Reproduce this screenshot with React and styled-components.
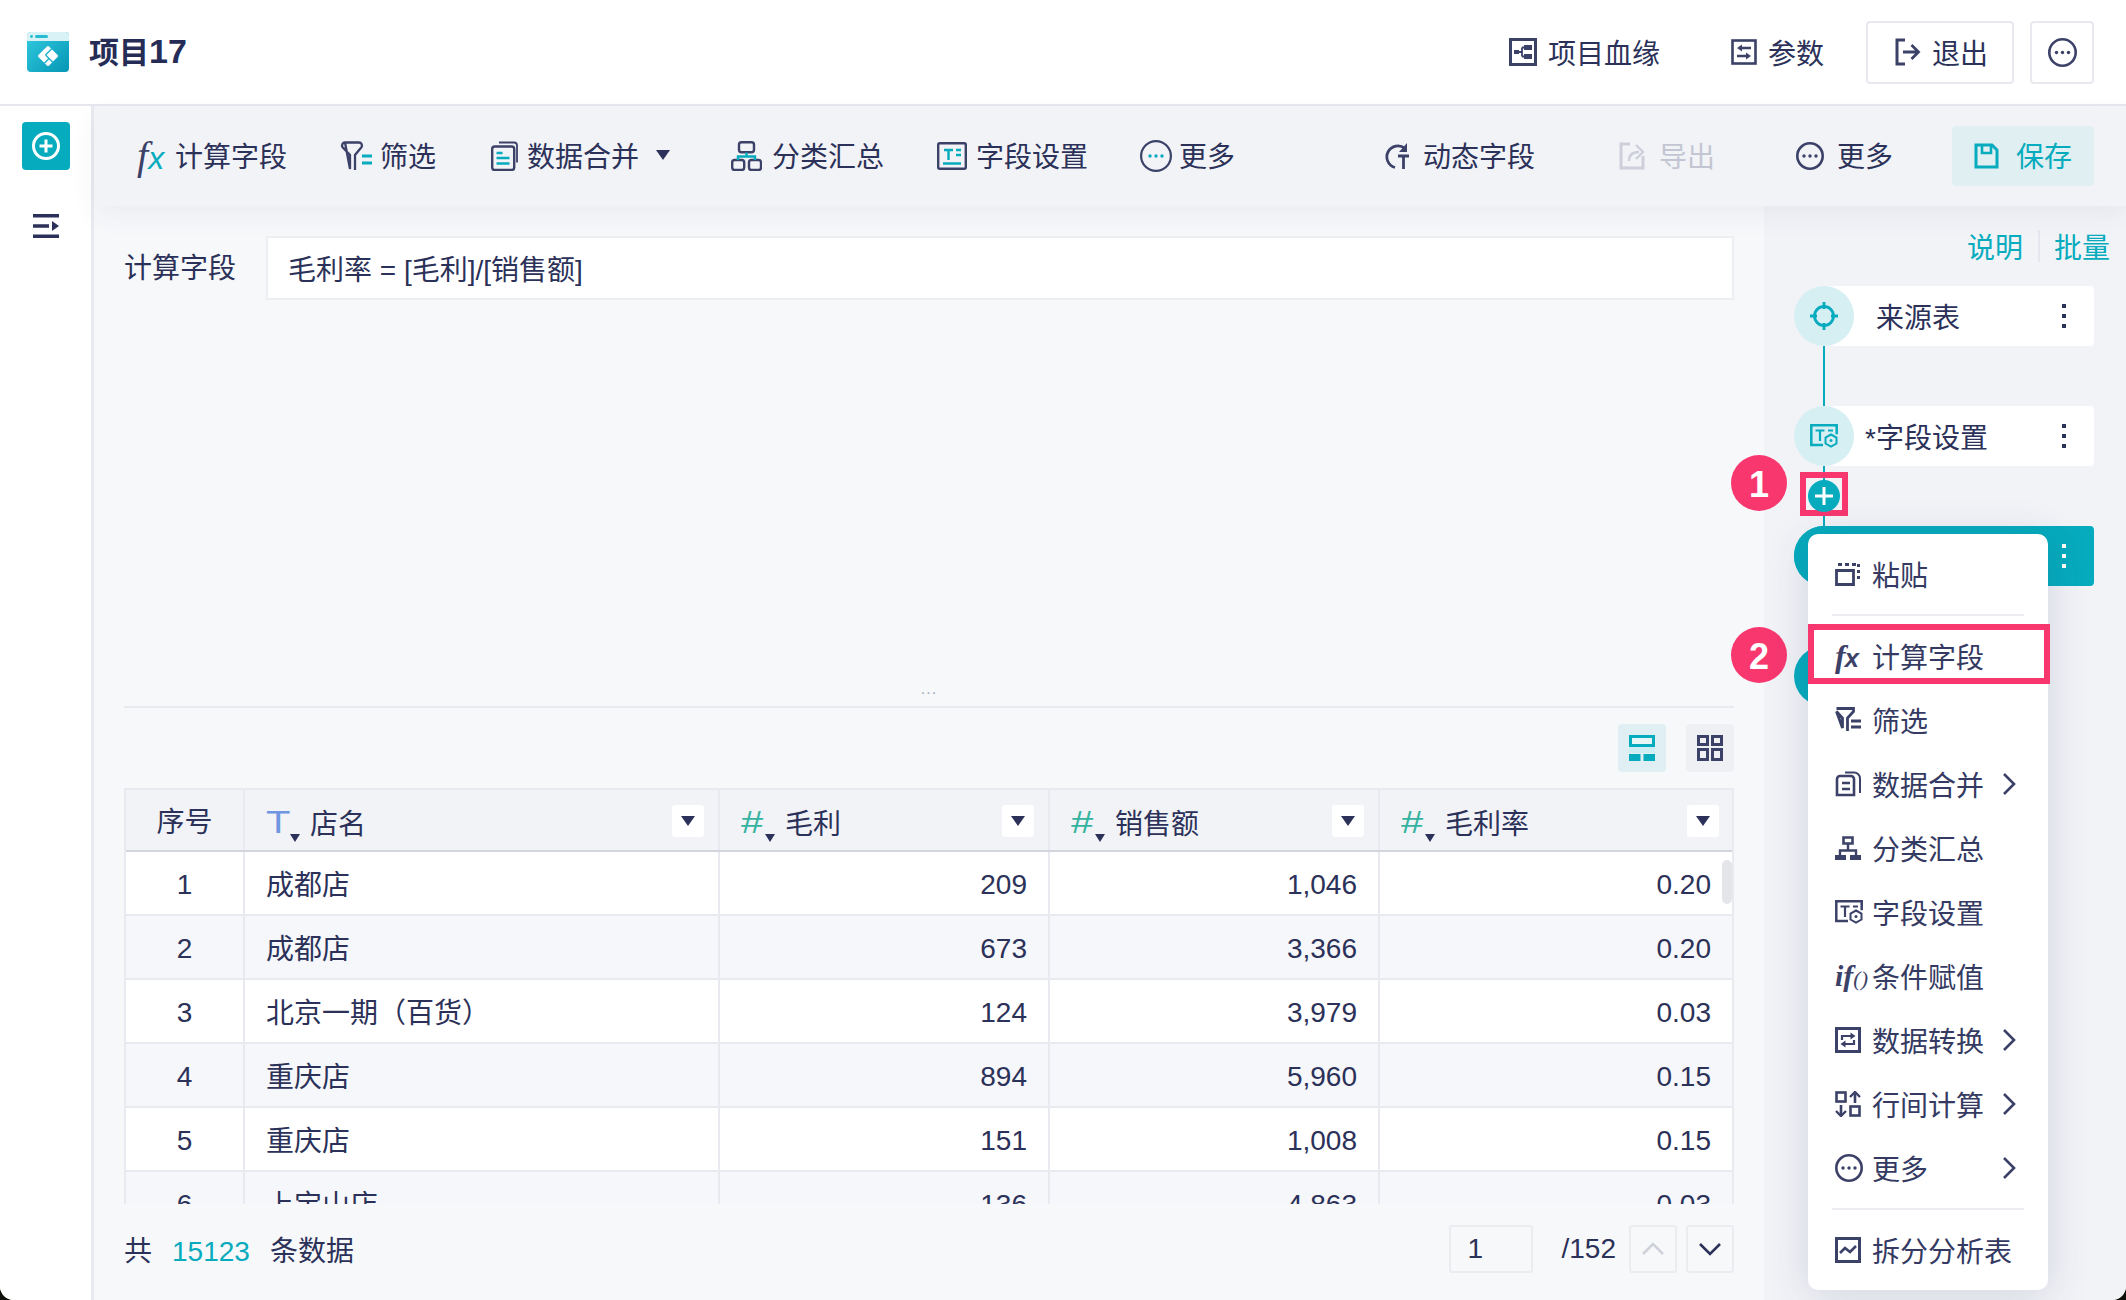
import React from 'react';
import styled, { createGlobalStyle } from 'styled-components';

const NAVY = '#2b3158';
const ICON = '#3c4168';
const TEAL = '#06abbd';
const PINK = '#f8376f';
const LINE = '#e9eaef';

const GlobalStyle = createGlobalStyle`
  html, body {
    margin: 0;
    padding: 0;
    background: #10100a;
  }
  body {
    font-family: "Liberation Sans", "Noto Sans CJK SC", sans-serif;
    font-size: 28px;
    color: ${NAVY};
  }
`;

const Page = styled.div`
  width: 2126px;
  height: 1300px;
  background: #fff;
  overflow: hidden;
  border-radius: 0 0 14px 14px;
  display: flex;
  flex-direction: column;
`;

/* top bar */
const TopBar = styled.header`
  height: 104px;
  flex: none;
  display: flex;
  align-items: center;
  padding: 0 32px 0 27px;
  background: #fff;
  border-bottom: 2px solid #e6e7ee;
`;

const Title = styled.h1`
  margin: 0 0 4px 20px;
  font-size: 30px;
  font-weight: 700;
  color: #252c56;
  flex: 1;
  b {
    font-size: 34px;
  }
`;

const TopAction = styled.div`
  display: flex;
  align-items: center;
  gap: 11px;
  margin-right: ${(p) => p.$mr || 0}px;
`;

const OutlineButton = styled.div`
  height: 63px;
  width: ${(p) => p.$w}px;
  box-sizing: border-box;
  display: flex;
  align-items: center;
  justify-content: center;
  gap: 11px;
  padding-left: ${(p) => p.$pl || 0}px;
  border: 2px solid #e8e9ef;
  border-radius: 4px;
  margin-left: ${(p) => p.$ml || 0}px;
`;

/* layout */
const Body = styled.div`
  flex: 1;
  display: flex;
  min-height: 0;
`;

const Sidebar = styled.aside`
  width: 91px;
  flex: none;
  background: #fff;
  border-right: 3px solid ${LINE};
  display: flex;
  flex-direction: column;
  align-items: center;
  padding-top: 16px;
  gap: 44px;
`;

const AddButton = styled.div`
  width: 48px;
  height: 48px;
  border-radius: 4px;
  background: ${TEAL};
  display: flex;
  align-items: center;
  justify-content: center;
`;

const Main = styled.div`
  flex: 1;
  display: flex;
  flex-direction: column;
  min-width: 0;
`;

const Toolbar = styled.div`
  height: 100px;
  flex: none;
  display: flex;
  align-items: center;
  justify-content: space-between;
  padding: 0 32px 0 43px;
  background: #f2f3f7;
  box-shadow: 0 10px 24px rgba(60, 70, 110, 0.06);
  position: relative;
  z-index: 2;
`;

const ToolGroup = styled.div`
  display: flex;
  align-items: center;
`;

const ToolItem = styled.div`
  display: flex;
  align-items: center;
  gap: ${(p) => (p.$gap === undefined ? 10 : p.$gap)}px;
  margin-left: ${(p) => p.$ml || 0}px;
  color: ${(p) => (p.$disabled ? '#c3c6d2' : NAVY)};
  > span {
    position: relative;
    top: -1px;
  }
`;

const SaveButton = styled.div`
  width: 142px;
  height: 60px;
  margin-left: 59px;
  display: flex;
  align-items: center;
  justify-content: center;
  gap: 17px;
  border-radius: 4px;
  background: #e0eff2;
  color: ${TEAL};
  > span {
    position: relative;
    top: -1px;
  }
`;

const Caret = styled.span`
  width: 0;
  height: 0;
  margin-left: 8px;
  border-left: 7px solid transparent;
  border-right: 7px solid transparent;
  border-top: 10px solid ${NAVY};
`;

const FxMark = styled.i`
  font-family: "Liberation Serif", serif;
  font-style: italic;
  font-size: ${(p) => p.$size || 40}px;
  font-weight: ${(p) => p.$weight || 400};
  line-height: 1;
  width: ${(p) => p.$w || 30}px;
  letter-spacing: ${(p) => p.$track || 0}px;
  white-space: nowrap;
  color: ${ICON};
  em {
    font-family: "Liberation Sans", sans-serif;
    font-size: 0.8em;
    color: ${(p) => p.$accent || TEAL};
  }
`;

const Content = styled.div`
  flex: 1;
  display: flex;
  min-height: 0;
`;

const WorkArea = styled.section`
  flex: 1;
  min-width: 0;
  background: #f7f8fa;
  padding: 30px 30px 0;
  display: flex;
  flex-direction: column;
`;

const FormRow = styled.div`
  display: flex;
  align-items: center;
  height: 64px;
  flex: none;
`;

const FormLabel = styled.label`
  width: 142px;
  flex: none;
  position: relative;
  top: -2px;
`;

const FormulaInput = styled.div`
  flex: 1;
  height: 64px;
  box-sizing: border-box;
  background: #fff;
  border: 2px solid #eceef2;
  padding-left: 20px;
  display: flex;
  align-items: center;
`;

const Splitter = styled.div`
  height: 408px;
  box-sizing: border-box;
  padding-bottom: 8px;
  flex: none;
  border-bottom: 2px solid ${LINE};
  display: flex;
  align-items: flex-end;
  justify-content: center;
  color: #a9adbb;
  font-size: 16px;
  line-height: 18px;
  letter-spacing: 1px;
`;

const ViewRow = styled.div`
  display: flex;
  justify-content: flex-end;
  gap: 20px;
  margin: 16px 0;
  flex: none;
`;

const ViewButton = styled.div`
  width: 48px;
  height: 48px;
  border-radius: 4px;
  display: flex;
  align-items: center;
  justify-content: center;
  background: ${(p) => (p.$active ? '#e0eff4' : '#eff0f4')};
`;

/* table */
const TableWrap = styled.div`
  height: 416px;
  flex: none;
  overflow: hidden;
  position: relative;
  box-sizing: border-box;
  border: 2px solid ${LINE};
  border-bottom: 0;
`;

const HeadRow = styled.div`
  display: flex;
  height: 62px;
  box-sizing: border-box;
  background: #f2f3f7;
  border-bottom: 2px solid #d2d5de;
`;

const DataRow = styled.div`
  display: flex;
  height: 64px;
  box-sizing: border-box;
  background: ${(p) => (p.$even ? '#f6f7fa' : '#fff')};
  border-bottom: 2px solid ${LINE};
`;

const Cell = styled.div`
  width: ${(p) => p.$w}px;
  flex: none;
  box-sizing: border-box;
  display: flex;
  align-items: center;
  justify-content: ${(p) =>
    p.$align === 'center' ? 'center' : p.$align === 'right' ? 'flex-end' : 'flex-start'};
  padding: ${(p) => (p.$num ? '4px' : '0')} 21px 0;
  border-right: 2px solid ${LINE};
  white-space: nowrap;
  &:last-child {
    border-right: 0;
  }
`;

const HeadCell = styled(Cell)`
  padding: 1px 14px 0 21px;
  &:last-child {
    padding-right: 13px;
  }
`;

const TypeMark = styled.span`
  position: relative;
  width: 22px;
  margin-right: 22px;
  top: 1px;
  line-height: 32px;
  &::after {
    content: '';
    position: absolute;
    left: 24px;
    bottom: -4px;
    border-left: 5px solid transparent;
    border-right: 5px solid transparent;
    border-top: 8px solid ${NAVY};
  }
`;

const TypeGlyph = styled.span`
  display: block;
  font-size: 32px;
  color: ${(p) => p.$color};
  transform: scaleX(1.25);
  transform-origin: left center;
`;

const HeadText = styled.span`
  flex: 1;
  position: relative;
  top: 1px;
`;

const FilterButton = styled.span`
  width: 32px;
  height: 32px;
  border-radius: 3px;
  background: #fff;
  display: flex;
  align-items: center;
  justify-content: center;
  &::before {
    content: '';
    border-left: 7px solid transparent;
    border-right: 7px solid transparent;
    border-top: 10px solid ${NAVY};
  }
`;

const ScrollThumb = styled.div`
  position: absolute;
  right: 0;
  top: 70px;
  width: 10px;
  height: 44px;
  border-radius: 6px;
  background: #e4e5e9;
`;

const Footer = styled.div`
  flex: 1;
  display: flex;
  align-items: center;
  justify-content: space-between;
  padding-bottom: 7px;
`;

const Total = styled.div`
  display: flex;
  align-items: baseline;
  gap: 20px;
`;

const Teal = styled.span`
  color: ${TEAL};
`;

const Pager = styled.div`
  display: flex;
  align-items: center;
`;

const PageBox = styled.div`
  width: 84px;
  height: 48px;
  box-sizing: border-box;
  border: 2px solid #ebecf0;
  border-radius: 3px;
  padding-left: 17px;
  display: flex;
  align-items: center;
`;

const PageCount = styled.span`
  margin: 0 13px 0 29px;
`;

const PageButton = styled.div`
  width: 48px;
  height: 48px;
  box-sizing: border-box;
  border: 2px solid #ebecf0;
  border-radius: 3px;
  margin-left: ${(p) => p.$ml || 0}px;
  display: flex;
  align-items: center;
  justify-content: center;
`;

/* right panel */
const SidePanel = styled.aside`
  width: 362px;
  flex: none;
  position: relative;
  background: #f2f3f7;
  padding-top: 24px;
  box-sizing: border-box;
`;

const LinkRow = styled.div`
  display: flex;
  justify-content: flex-end;
  align-items: center;
  height: 32px;
  padding-right: 16px;
  margin-bottom: 24px;
  color: ${TEAL};
`;

const LinkDivider = styled.span`
  width: 2px;
  height: 32px;
  background: #e6e7ee;
  margin: 0 14px 0 15px;
`;

const Nodes = styled.div`
  padding: 0 32px 0 30px;
`;

const Node = styled.div`
  display: flex;
  align-items: center;
  height: 60px;
  width: ${(p) => (p.$bare ? 60 : 300)}px;
  border-radius: 30px 4px 4px 30px;
  background: ${(p) => (p.$active ? TEAL : '#fff')};
`;

const NodeCircle = styled.div`
  width: 60px;
  height: 60px;
  flex: none;
  border-radius: 50%;
  background: ${(p) => (p.$active ? TEAL : '#d6eff3')};
  display: flex;
  align-items: center;
  justify-content: center;
`;

const NodeLabel = styled.span`
  flex: 1;
  margin-left: ${(p) => p.$ml}px;
`;

const Dots = styled.span`
  width: 4px;
  margin-right: 28px;
  display: flex;
  flex-direction: column;
  gap: 6px;
  i {
    width: 4px;
    height: 4px;
    background: ${(p) => (p.$light ? '#fff' : NAVY)};
  }
`;

const Connector = styled.div`
  position: relative;
  width: 2px;
  height: 60px;
  margin-left: 29px;
  background: ${TEAL};
`;

const PlusCircle = styled.div`
  position: absolute;
  left: -15px;
  top: 14px;
  width: 32px;
  height: 32px;
  border-radius: 50%;
  background: ${TEAL};
  display: flex;
  align-items: center;
  justify-content: center;
`;

const PlusFrame = styled.div`
  position: absolute;
  left: -23px;
  top: 6px;
  width: 48px;
  height: 44px;
  box-sizing: border-box;
  border: 6px solid ${PINK};
`;

const Badge = styled.div`
  position: absolute;
  left: -33px;
  top: ${(p) => p.$top}px;
  width: 56px;
  height: 56px;
  box-sizing: border-box;
  padding-top: 4px;
  border-radius: 50%;
  background: ${PINK};
  color: #fff;
  font-size: 36px;
  font-weight: 700;
  display: flex;
  align-items: center;
  justify-content: center;
`;

const Menu = styled.div`
  position: absolute;
  left: 44px;
  top: 328px;
  width: 240px;
  padding: 8px 0;
  box-sizing: border-box;
  border-radius: 10px;
  background: #fff;
  box-shadow: 0 6px 44px rgba(40, 55, 100, 0.16);
  z-index: 3;
`;

const MenuRule = styled.div`
  height: 2px;
  margin: 8px 24px;
  background: #ecedf1;
`;

const MenuItem = styled.div`
  position: relative;
  height: 64px;
  display: flex;
  align-items: center;
  padding-left: 27px;
  color: #343a62;
  ${(p) =>
    p.$marked &&
    `&::after {
      content: '';
      position: absolute;
      left: 0;
      right: -2px;
      top: 0;
      height: 60px;
      box-sizing: border-box;
      border: 6px solid ${PINK};
    }`}
`;

const MenuIcon = styled.span`
  width: 37px;
  flex: none;
  display: flex;
  align-items: center;
`;

const MenuText = styled.span`
  flex: 1;
`;

const MenuArrow = styled.svg`
  width: 14px;
  height: 24px;
  margin-right: 32px;
`;

const IconSvg = styled.svg`
  flex: none;
  display: block;
`;

/* drawn icons */
const Svg = ({ w, h = w, children }) => (
  <IconSvg width={w} height={h} viewBox={`0 0 ${w} ${h}`} fill="none">
    {children}
  </IconSvg>
);

const Logo = () => (
  <IconSvg width="42" height="40" viewBox="0 0 42 40">
    <defs>
      <linearGradient id="lg" x1="0" y1="0" x2="1" y2="1">
        <stop offset="0" stopColor="#33cbe0" />
        <stop offset="1" stopColor="#0596b5" />
      </linearGradient>
    </defs>
    <rect width="42" height="40" rx="4" fill="url(#lg)" />
    <path d="M0 9V4a4 4 0 0 1 4-4h34a4 4 0 0 1 4 4v5z" fill="#d9f2f6" />
    <rect x="8" y="3" width="13" height="3" rx="1.5" fill="#26bdd4" />
    <circle cx="4.5" cy="4.5" r="1.4" fill="#26bdd4" />
    <g transform="rotate(45 21 24)">
      <rect x="13.500" y="16.500" width="15" height="15" rx="1.500" fill="#fff" />
      <path d="M18.500 16v9M18.500 25h11M23.500 32v-7" stroke="#22b4cf" strokeWidth="1.500" />
    </g>
  </IconSvg>
);

const CircleMore = ({ size = 29, dots = ICON, sw = 2.6 }) => (
  <Svg w={size}>
    <circle cx={size / 2} cy={size / 2} r={size / 2 - sw / 2} stroke={ICON} strokeWidth={sw} />
    <circle cx={size / 2 - 6} cy={size / 2} r="1.700" fill={dots} />
    <circle cx={size / 2} cy={size / 2} r="1.700" fill={dots} />
    <circle cx={size / 2 + 6} cy={size / 2} r="1.700" fill={dots} />
  </Svg>
);

const LineageIcon = () => (
  <Svg w={28}>
    <rect x="1.500" y="1.500" width="25" height="25" stroke={ICON} strokeWidth="3" />
    <path d="M5 12h5v4H5zM15 7h8v5h-8zM15 16h8v5h-8z" fill={ICON} />
    <path d="M10 14h3M13 9.500v9M13 9.500h2M13 18.500h2" stroke={ICON} strokeWidth="1.800" />
  </Svg>
);

const ParamIcon = () => (
  <Svg w={26}>
    <rect x="1.500" y="1.500" width="23" height="23" stroke={ICON} strokeWidth="2.600" />
    <path d="M9 9h11M6 17h11" stroke={ICON} strokeWidth="2.400" />
    <path d="M11 5.500L6 9l5 3.500zM15 13.500l5 3.500-5 3.500z" fill={ICON} />
  </Svg>
);

const ExitIcon = () => (
  <Svg w={26} h={28}>
    <path d="M10 2H2v24h8" stroke={ICON} strokeWidth="3" />
    <path d="M8 14h15M16.500 7l7 7-7 7" stroke={ICON} strokeWidth="2.800" />
  </Svg>
);

const FilterIcon = () => (
  <Svg w={32} h={30}>
    <path d="M5 1.500h14a3 3 0 0 1 2.400 4.800L15 14v15M10 28V14L2.600 6.300A3 3 0 0 1 5 1.500z" stroke={ICON} strokeWidth="2.300" />
    <path d="M22 15h10M22 22h10" stroke={TEAL} strokeWidth="2.800" />
  </Svg>
);

const MergeIcon = () => (
  <Svg w={27} h={30}>
    <rect x="1.200" y="5.500" width="22" height="23.500" rx="2.500" stroke={ICON} strokeWidth="2.400" />
    <path d="M8 1.500h15a3 3 0 0 1 3 3v17" stroke={ICON} strokeWidth="1.800" />
    <path d="M5.500 12h6M5.500 17h13M5.500 22.500h13" stroke={TEAL} strokeWidth="2.400" />
  </Svg>
);

const GroupIcon = () => (
  <Svg w={31} h={30}>
    <rect x="8" y="1.200" width="15" height="10" rx="2.500" stroke={ICON} strokeWidth="2.400" />
    <rect x="1.200" y="19" width="12" height="10" rx="2.500" stroke={ICON} strokeWidth="2.400" />
    <rect x="18" y="19" width="12" height="10" rx="2.500" stroke={ICON} strokeWidth="2.400" />
    <path d="M15.500 11.500v4M7 19v-3.500h17V19" stroke={TEAL} strokeWidth="2.400" />
  </Svg>
);

const FieldIcon = () => (
  <Svg w={30} h={28}>
    <rect x="1.200" y="1.200" width="27.600" height="25.600" rx="1.500" stroke={ICON} strokeWidth="2.400" />
    <path d="M7 8h9M11.500 8v10M19 8h5M19 13h5M6 21.500h18" stroke={TEAL} strokeWidth="2.400" />
  </Svg>
);

const DynamicIcon = () => (
  <Svg w={27}>
    <path d="M21 5.500A11 11 0 1 0 11 24.500" stroke={ICON} strokeWidth="2.800" />
    <path d="M23 0v9h-8z" fill={ICON} />
    <path d="M14 13h11M19.500 13v13" stroke={ICON} strokeWidth="2.800" />
  </Svg>
);

const ExportIcon = () => (
  <Svg w={27} h={28}>
    <path d="M11 2H2v24h22V14" stroke="#cdd0da" strokeWidth="3" />
    <path d="M10 19c0-6 3-9 10-9M17 3l7 7-7 7" stroke="#cdd0da" strokeWidth="2.400" />
  </Svg>
);

const SaveIcon = () => (
  <Svg w={25} h={26}>
    <path d="M2 2h16l5 5v17H2z" stroke={TEAL} strokeWidth="3" />
    <path d="M8 2v8h9V2" stroke={TEAL} strokeWidth="2.600" />
  </Svg>
);

const TargetIcon = () => (
  <Svg w={28}>
    <circle cx="14" cy="14" r="9.500" stroke={TEAL} strokeWidth="2.800" />
    <path d="M14 0v7M14 21v7M0 14h7M21 14h7" stroke={TEAL} strokeWidth="2.800" />
  </Svg>
);

const FieldGearIcon = ({ color = TEAL }) => (
  <IconSvg width="28" height="24" viewBox="0 0 28 24" fill="none">
    <path d="M13 21H1.300V1.300h25.400v9" stroke={color} strokeWidth="2.500" />
    <path d="M5.500 6.500h9M10 6.500V17M18 6.500h5" stroke={color} strokeWidth="2.200" />
    <path d="M21 10.500l5.500 3v6L21 22.600l-5.500-3.100v-6z" stroke={color} strokeWidth="2" />
    <circle cx="21" cy="16.500" r="1.500" fill={color} />
  </IconSvg>
);

const PasteIcon = () => (
  <Svg w={26} h={24}>
    <path d="M1.500 8.500h17v14h-17z" stroke={ICON} strokeWidth="2.800" />
    <path d="M3 2.500h4M10 2.500h4M17 2.500h4M23.500 2v3M23.500 8v3M23.500 14v3" stroke={ICON} strokeWidth="3" />
  </Svg>
);

const MenuFilterIcon = () => (
  <Svg w={26} h={26}>
    <path d="M1.500 1.500h17v3L12.500 11v13M7.500 21V11L1.500 4.500z" stroke={ICON} strokeWidth="2.800" />
    <path d="M16 14h10M16 20h10" stroke={ICON} strokeWidth="2.800" />
  </Svg>
);

const MenuMergeIcon = () => (
  <Svg w={26} h={26}>
    <path d="M2 24V8a3 3 0 0 1 3-3h11a3 3 0 0 1 3 3v16z" stroke={ICON} strokeWidth="2.600" />
    <path d="M7 12h8M7 18h8" stroke={ICON} strokeWidth="2.400" />
    <path d="M10 1.500h9a6 6 0 0 1 6 6V22" stroke={ICON} strokeWidth="2" />
  </Svg>
);

const MenuGroupIcon = () => (
  <Svg w={26} h={24}>
    <path d="M8.500 1.500h9v6h-9z" stroke={ICON} strokeWidth="2.600" />
    <path d="M0 19h11v5H0zM15 19h11v5H15z" fill={ICON} />
    <path d="M13 8v6M5 19v-4.500h16V19" stroke={ICON} strokeWidth="2.400" />
  </Svg>
);

const ConvertIcon = () => (
  <Svg w={26} h={26}>
    <rect x="1.500" y="1.500" width="23" height="23" stroke={ICON} strokeWidth="3" />
    <path d="M7 13V9h12M19 13v4H7" stroke={ICON} strokeWidth="2.200" />
    <path d="M15.500 5.500l5 3.500-5 3.500zM10.500 13.500l-5 3.500 5 3.500z" fill={ICON} />
  </Svg>
);

const RowCalcIcon = () => (
  <Svg w={26} h={26}>
    <rect x="1.500" y="1.500" width="9" height="9" stroke={ICON} strokeWidth="2.600" />
    <rect x="15.500" y="15.500" width="9" height="9" stroke={ICON} strokeWidth="2.600" />
    <path d="M20 12V3M6 14v11" stroke={ICON} strokeWidth="2.600" />
    <path d="M15 6l5-5 5 5M1 20l5 5 5-5" stroke={ICON} strokeWidth="2.400" />
  </Svg>
);

const SplitIcon = () => (
  <Svg w={26} h={26}>
    <rect x="1.500" y="1.500" width="23" height="23" stroke={ICON} strokeWidth="3" />
    <path d="M5 16l5-5 5 4 6-6" stroke={ICON} strokeWidth="2.600" />
  </Svg>
);

const IfMark = styled.i`
  font-family: "Liberation Serif", serif;
  font-size: 30px;
  font-weight: 700;
  line-height: 1;
  color: ${ICON};
  white-space: nowrap;
  small {
    font-size: 22px;
    font-weight: 400;
  }
`;

const Chevron = () => (
  <MenuArrow viewBox="0 0 14 24" fill="none">
    <path d="M2 2l10 10L2 22" stroke={ICON} strokeWidth="2.600" />
  </MenuArrow>
);

const columns = [119, 475, 330, 330, 352];

const rows = [
  ['1', '成都店', '209', '1,046', '0.20'],
  ['2', '成都店', '673', '3,366', '0.20'],
  ['3', '北京一期（百货）', '124', '3,979', '0.03'],
  ['4', '重庆店', '894', '5,960', '0.15'],
  ['5', '重庆店', '151', '1,008', '0.15'],
  ['6', '上宝山店', '136', '4,863', '0.03'],
];

const menuItems = [
  { label: '筛选', icon: <MenuFilterIcon /> },
  { label: '数据合并', icon: <MenuMergeIcon />, sub: true },
  { label: '分类汇总', icon: <MenuGroupIcon /> },
  { label: '字段设置', icon: <FieldGearIcon color={ICON} /> },
  { label: '条件赋值', icon: <IfMark>if<small>()</small></IfMark> },
  { label: '数据转换', icon: <ConvertIcon />, sub: true },
  { label: '行间计算', icon: <RowCalcIcon />, sub: true },
  { label: '更多', icon: <CircleMore size={28} />, sub: true },
];

const HeaderCell = ({ w, type, children }) => (
  <HeadCell $w={w}>
    <TypeMark>
      <TypeGlyph $color={type === 'T' ? '#6f96e0' : '#35b3a0'}>{type}</TypeGlyph>
    </TypeMark>
    <HeadText>{children}</HeadText>
    <FilterButton />
  </HeadCell>
);

const App = () => {
  return (
    <Page>
      <GlobalStyle />
      <TopBar>
        <Logo />
        <Title>项目<b>17</b></Title>
        <TopAction $mr={71}>
          <LineageIcon />
          <span>项目血缘</span>
        </TopAction>
        <TopAction $mr={42}>
          <ParamIcon />
          <span>参数</span>
        </TopAction>
        <OutlineButton $w={148} $pl={3}>
          <ExitIcon />
          <span>退出</span>
        </OutlineButton>
        <OutlineButton $w={64} $ml={16}>
          <CircleMore size={29} />
        </OutlineButton>
      </TopBar>

      <Body>
        <Sidebar>
          <AddButton>
            <Svg w={30}>
              <circle cx="15" cy="15" r="12.500" stroke="#fff" strokeWidth="3" />
              <path d="M15 8.500v13M8.500 15h13" stroke="#fff" strokeWidth="3" />
            </Svg>
          </AddButton>
          <Svg w={26} h={24}>
            <path d="M0 1.700h26M0 22.300h26M0 12h16" stroke={NAVY} strokeWidth="3.400" />
            <path d="M19 7l7 5-7 5z" fill={NAVY} />
          </Svg>
        </Sidebar>

        <Main>
          <Toolbar>
            <ToolGroup>
              <ToolItem $gap={8}>
                <FxMark>f<em>x</em></FxMark>
                <span>计算字段</span>
              </ToolItem>
              <ToolItem $ml={53} $gap={8}>
                <FilterIcon />
                <span>筛选</span>
              </ToolItem>
              <ToolItem $ml={55} $gap={9}>
                <MergeIcon />
                <span>数据合并</span>
                <Caret />
              </ToolItem>
              <ToolItem $ml={61}>
                <GroupIcon />
                <span>分类汇总</span>
              </ToolItem>
              <ToolItem $ml={53} $gap={9}>
                <FieldIcon />
                <span>字段设置</span>
              </ToolItem>
              <ToolItem $ml={52} $gap={7}>
                <CircleMore size={32} dots={TEAL} sw={2.2} />
                <span>更多</span>
              </ToolItem>
            </ToolGroup>
            <ToolGroup>
              <ToolItem $gap={12}>
                <DynamicIcon />
                <span>动态字段</span>
              </ToolItem>
              <ToolItem $ml={84} $gap={13} $disabled>
                <ExportIcon />
                <span>导出</span>
              </ToolItem>
              <ToolItem $ml={81} $gap={13}>
                <CircleMore size={28} />
                <span>更多</span>
              </ToolItem>
              <SaveButton>
                <SaveIcon />
                <span>保存</span>
              </SaveButton>
            </ToolGroup>
          </Toolbar>

          <Content>
            <WorkArea>
              <FormRow>
                <FormLabel>计算字段</FormLabel>
                <FormulaInput>毛利率 = [毛利]/[销售额]</FormulaInput>
              </FormRow>
              <Splitter>...</Splitter>
              <ViewRow>
                <ViewButton $active>
                  <Svg w={26}>
                    <rect x="1.500" y="1.500" width="23" height="9" fill="#e9f6f8" stroke={TEAL} strokeWidth="3" />
                    <rect x="0" y="12" width="26" height="6" fill="#cfeef3" />
                    <path d="M0 19h11.500v7H0zM14.500 19H26v7H14.500z" fill={TEAL} />
                  </Svg>
                </ViewButton>
                <ViewButton>
                  <Svg w={26}>
                    <path d="M1.500 1.500h9v8h-9zM15.500 1.500h9v8h-9zM1.500 14.500h9v10h-9zM15.500 14.500h9v10h-9z" stroke={ICON} strokeWidth="3" />
                  </Svg>
                </ViewButton>
              </ViewRow>
              <TableWrap>
                <HeadRow>
                  <Cell $w={columns[0]} $align="center">序号</Cell>
                  <HeaderCell w={columns[1]} type="T">店名</HeaderCell>
                  <HeaderCell w={columns[2]} type="#">毛利</HeaderCell>
                  <HeaderCell w={columns[3]} type="#">销售额</HeaderCell>
                  <HeaderCell w={columns[4]} type="#">毛利率</HeaderCell>
                </HeadRow>
                {rows.map((row, i) => (
                  <DataRow key={row[0]} $even={i % 2 === 1}>
                    <Cell $w={columns[0]} $align="center" $num>{row[0]}</Cell>
                    <Cell $w={columns[1]}>{row[1]}</Cell>
                    <Cell $w={columns[2]} $align="right" $num>{row[2]}</Cell>
                    <Cell $w={columns[3]} $align="right" $num>{row[3]}</Cell>
                    <Cell $w={columns[4]} $align="right" $num>{row[4]}</Cell>
                  </DataRow>
                ))}
                <ScrollThumb />
              </TableWrap>
              <Footer>
                <Total>
                  <span>共</span>
                  <Teal>15123</Teal>
                  <span>条数据</span>
                </Total>
                <Pager>
                  <PageBox>1</PageBox>
                  <PageCount>/152</PageCount>
                  <PageButton>
                    <Svg w={24} h={14}>
                      <path d="M2 12l10-10 10 10" stroke="#cfd1da" strokeWidth="2.600" />
                    </Svg>
                  </PageButton>
                  <PageButton $ml={9}>
                    <Svg w={24} h={14}>
                      <path d="M2 2l10 10 10-10" stroke={NAVY} strokeWidth="2.600" />
                    </Svg>
                  </PageButton>
                </Pager>
              </Footer>
            </WorkArea>

            <SidePanel>
              <LinkRow>
                <span>说明</span>
                <LinkDivider />
                <span>批量</span>
              </LinkRow>
              <Nodes>
                <Node>
                  <NodeCircle><TargetIcon /></NodeCircle>
                  <NodeLabel $ml={22}>来源表</NodeLabel>
                  <Dots><i /><i /><i /></Dots>
                </Node>
                <Connector />
                <Node>
                  <NodeCircle><FieldGearIcon /></NodeCircle>
                  <NodeLabel $ml={11}>*字段设置</NodeLabel>
                  <Dots><i /><i /><i /></Dots>
                </Node>
                <Connector>
                  <PlusFrame />
                  <PlusCircle>
                    <Svg w={20}>
                      <path d="M10 1v18M1 10h18" stroke="#fff" strokeWidth="3" />
                    </Svg>
                  </PlusCircle>
                </Connector>
                <Node $active>
                  <NodeCircle $active />
                  <NodeLabel $ml={12} />
                  <Dots $light><i /><i /><i /></Dots>
                </Node>
                <Connector />
                <Node $bare>
                  <NodeCircle $active />
                </Node>
              </Nodes>

              <Badge $top={249}>1</Badge>
              <Badge $top={421}>2</Badge>

              <Menu>
                <MenuItem>
                  <MenuIcon><PasteIcon /></MenuIcon>
                  <MenuText>粘贴</MenuText>
                </MenuItem>
                <MenuRule />
                <MenuItem $marked>
                  <MenuIcon>
                    <FxMark $size={32} $weight={700} $w={28} $accent={ICON} $track={-1}>f<em>x</em></FxMark>
                  </MenuIcon>
                  <MenuText>计算字段</MenuText>
                </MenuItem>
                {menuItems.map((item) => (
                  <MenuItem key={item.label}>
                    <MenuIcon>{item.icon}</MenuIcon>
                    <MenuText>{item.label}</MenuText>
                    {item.sub && <Chevron />}
                  </MenuItem>
                ))}
                <MenuRule />
                <MenuItem>
                  <MenuIcon><SplitIcon /></MenuIcon>
                  <MenuText>拆分分析表</MenuText>
                </MenuItem>
              </Menu>
            </SidePanel>
          </Content>
        </Main>
      </Body>
    </Page>
  );
};

export default App;
